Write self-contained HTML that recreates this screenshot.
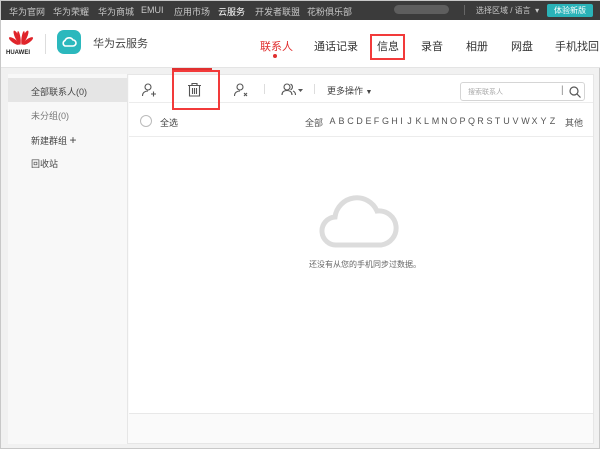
<!DOCTYPE html>
<html><head><meta charset="utf-8"><style>
*{margin:0;padding:0;box-sizing:border-box}
body{width:600px;height:449px;overflow:hidden;background:#f1f1f1;font-family:"Liberation Sans","Noto Sans CJK SC",sans-serif;position:relative;border:1px solid #c8c8c8}
.a{position:absolute}
.top{left:0;top:0;width:600px;height:19px;background:#3b3b3b;font-size:9px;color:#c8c8c8}
.top span{position:absolute;top:4px}
.hdr{left:0;top:19px;width:600px;height:48px;background:#fff;border-bottom:1px solid #e4e4e4}
.nav{position:absolute;top:37px;font-size:11px;color:#333}
.panel{left:7px;top:73px;width:586px;height:370px;background:#fafafa;border:1px solid #e6e6e6}
.side{left:7px;top:73px;width:120px;height:370px;background:#f8f8f8;border-right:1px solid #e6e6e6}
.side div{position:absolute;left:0;width:120px;height:24px;font-size:9px;color:#444;padding:7px 0 0 23px}
.main{left:128px;top:74px;width:464px;height:339px;background:#fff;border-bottom:1px solid #e8e8e8}
.rb{border:2px solid #f23a3a}
.lt{position:absolute;top:41px;font-size:9px;color:#555;width:9px;text-align:center}
</style></head><body>
<div class="a top">
<span style="left:8px">华为官网</span><span style="left:52px">华为荣耀</span><span style="left:97px">华为商城</span><span style="left:140px">EMUI</span><span style="left:173px">应用市场</span><span style="left:217px;color:#fff">云服务</span><span style="left:254px">开发者联盟</span><span style="left:306px">花粉俱乐部</span>
<div class="a" style="left:393px;top:4px;width:55px;height:9px;background:#777;border-radius:5px;opacity:.6"></div>
<div class="a" style="left:463px;top:4px;width:1px;height:10px;background:#666"></div>
<span style="left:475px;font-size:8px">选择区域 / 语言 &nbsp;▾</span>
<div class="a" style="left:546px;top:3px;width:46px;height:13px;background:#2ab3b8;border-radius:2px;color:#fff;font-size:8px;text-align:center;line-height:13px">体验新版</div>
</div>
<div class="a hdr">
<svg class="a" style="left:6px;top:9px" width="28" height="20" viewBox="0 0 28 20"><g fill="#e0242a"><ellipse cx="10" cy="8" rx="2" ry="7" transform="rotate(-25 10 8)"/><ellipse cx="18" cy="8" rx="2" ry="7" transform="rotate(25 18 8)"/><ellipse cx="7" cy="12" rx="2" ry="6" transform="rotate(-55 7 12)"/><ellipse cx="21" cy="12" rx="2" ry="6" transform="rotate(55 21 12)"/><ellipse cx="12" cy="9" rx="1.5" ry="7" transform="rotate(-8 12 9)"/><ellipse cx="16" cy="9" rx="1.5" ry="7" transform="rotate(8 16 9)"/></g></svg>
<div class="a" style="left:5px;top:30px;font-size:6px;font-weight:bold;color:#222">HUAWEI</div>
<div class="a" style="left:44px;top:14px;width:1px;height:20px;background:#ddd"></div>
<div class="a" style="left:56px;top:10px;width:24px;height:24px;border-radius:7px;background:#2bb8bd"></div>
<svg class="a" style="left:60px;top:15px" width="16" height="14" viewBox="0 0 16 14"><path d="M4 11 A3 3 0 0 1 4 5.5 A4.5 4.5 0 0 1 12 5 A3 3 0 0 1 12 11 Z" fill="none" stroke="#fff" stroke-width="1.6"/></svg>
<div class="a" style="left:92px;top:15px;font-size:11px;color:#444">华为云服务</div>
</div>
<div class="nav" style="left:259px;color:#e03030">联系人</div>
<div class="a" style="left:272px;top:53px;width:4px;height:4px;border-radius:2px;background:#e03030"></div>
<div class="nav" style="left:313px">通话记录</div>
<div class="nav" style="left:376px">信息</div>
<div class="a rb" style="left:369px;top:33px;width:35px;height:26px"></div>
<div class="nav" style="left:420px">录音</div>
<div class="nav" style="left:465px">相册</div>
<div class="nav" style="left:510px">网盘</div>
<div class="nav" style="left:554px">手机找回</div>
<div class="a" style="left:171px;top:67px;width:40px;height:2px;background:#e03030"></div>
<div class="a panel"></div>
<div class="a side">
<div style="top:4px;background:#e5e5e5;width:119px">全部联系人(0)</div>
<div style="top:28px;color:#777">未分组(0)</div>
<div style="top:52px">新建群组 <span style="font-size:12px">+</span></div>
<div style="top:76px">回收站</div>
</div>
<div class="a main">
<div class="a" style="left:0;top:0;width:464px;height:28px;border-bottom:1px solid #ececec"></div>
<svg class="a" style="left:12px;top:7px" width="16" height="16" viewBox="0 0 16 16" fill="none" stroke="#555" stroke-width="1.1"><circle cx="7" cy="5" r="3"/><path d="M1.5 14c0-3.5 2.5-5 5.5-5M10 12h5M12.5 9.5v5"/></svg>
<svg class="a" style="left:58px;top:7px" width="15" height="15" viewBox="0 0 15 15" fill="none" stroke="#555" stroke-width="1.1"><path d="M1 3.5h13M5 3.5V1.5h5v2M2.5 3.5v10.5h10V3.5M5.5 6v6M7.5 6v6M9.5 6v6"/></svg>
<svg class="a" style="left:104px;top:7px" width="16" height="16" viewBox="0 0 16 16" fill="none" stroke="#555" stroke-width="1.1"><circle cx="7" cy="5" r="3"/><path d="M1.5 14c0-3.5 2.5-5 5.5-5M11 11l3 3M14 11l-3 3"/></svg>
<div class="a" style="left:135px;top:9px;width:1px;height:10px;background:#ddd"></div>
<svg class="a" style="left:152px;top:7px" width="24" height="16" viewBox="0 0 24 16" fill="none" stroke="#555" stroke-width="1.1"><circle cx="6" cy="5" r="3"/><path d="M1 13c0-3 2-4.5 5-4.5S11 10 11 13M9.5 2.2a3 3 0 0 1 0 5.6M12 9c1.5.6 2.5 2 2.5 4"/><path d="M17 7h5l-2.5 3z" fill="#555" stroke="none"/></svg>
<div class="a" style="left:185px;top:9px;width:1px;height:10px;background:#ddd"></div>
<div class="a" style="left:198px;top:9px;font-size:9px;color:#444">更多操作 <span style="font-size:7px">▼</span></div>
<div class="a" style="left:331px;top:7px;width:125px;height:19px;border:1px solid #d5d5d5;border-radius:3px;background:#fff"><span class="a" style="left:7px;top:4px;font-size:7px;color:#aaa">搜索联系人</span><span class="a" style="left:100px;top:2px;font-size:10px;color:#888">|</span><svg class="a" style="left:108px;top:3px" width="12" height="12" viewBox="0 0 12 12" fill="none" stroke="#555" stroke-width="1.2"><circle cx="5" cy="5" r="4"/><path d="M8 8l3.5 3.5"/></svg></div>
<div class="a" style="left:11px;top:40px;width:12px;height:12px;border-radius:6px;border:1px solid #bbb"></div>
<div class="a" style="left:31px;top:41px;font-size:9px;color:#444">全选</div>
<div class="a" style="left:176px;top:41px;font-size:9px;color:#555">全部</div>
<span class="lt" style="left:199px">A</span><span class="lt" style="left:208px">B</span><span class="lt" style="left:217px">C</span><span class="lt" style="left:226px">D</span><span class="lt" style="left:235px">E</span><span class="lt" style="left:243px">F</span><span class="lt" style="left:252px">G</span><span class="lt" style="left:261px">H</span><span class="lt" style="left:268px">I</span><span class="lt" style="left:276px">J</span><span class="lt" style="left:285px">K</span><span class="lt" style="left:293px">L</span><span class="lt" style="left:302px">M</span><span class="lt" style="left:311px">N</span><span class="lt" style="left:320px">O</span><span class="lt" style="left:329px">P</span><span class="lt" style="left:338px">Q</span><span class="lt" style="left:347px">R</span><span class="lt" style="left:356px">S</span><span class="lt" style="left:364px">T</span><span class="lt" style="left:373px">U</span><span class="lt" style="left:382px">V</span><span class="lt" style="left:392px">W</span><span class="lt" style="left:401px">X</span><span class="lt" style="left:410px">Y</span><span class="lt" style="left:419px">Z</span>
<div class="a" style="left:436px;top:41px;font-size:9px;color:#555">其他</div>
<div class="a" style="left:0;top:61px;width:464px;height:1px;background:#ececec"></div>
<svg class="a" style="left:190px;top:118px" width="80" height="58" viewBox="0 0 80 58"><path d="M18 52 A14 14 0 0 1 16 24 A22 22 0 0 1 58 18 A17 17 0 0 1 62 52 Z" fill="none" stroke="#dcdcdc" stroke-width="5"/></svg>
<div class="a" style="left:180px;top:184px;font-size:8px;color:#666">还没有从您的手机同步过数据。</div>
</div>
<div class="a rb" style="left:171px;top:69px;width:48px;height:40px"></div>
</body></html>
